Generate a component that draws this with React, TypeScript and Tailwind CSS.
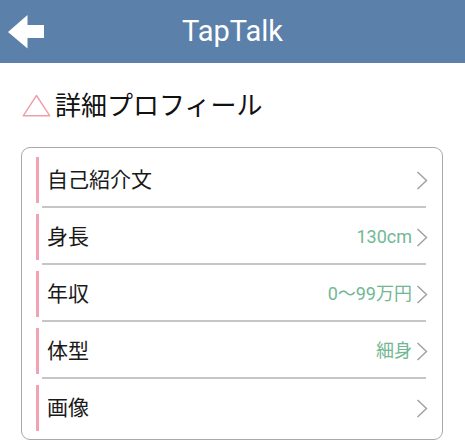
import React from "react";

interface ProfileRow {
    label: string;
    value?: string;
}

const rows: ProfileRow[] = [
    { label: "自己紹介文" },
    { label: "身長", value: "130cm" },
    { label: "年収", value: "0〜99万円" },
    { label: "体型", value: "細身" },
    { label: "画像" },
];

function BackArrow() {
    return (
        <svg width="37" height="34" viewBox="0 0 37 34" className="block">
            <path d="M0 17 L19.5 0 L19.5 10 L36 10 L36 23 L19.5 23 L19.5 33.5 Z" fill="#ffffff" />
        </svg>
    );
}

function Chevron() {
    return (
        <svg width="12" height="19" viewBox="0 0 12 19" className="block shrink-0">
            <polyline points="1.5,1 10.5,9.5 1.5,18" fill="none" stroke="#a2a2a2" strokeWidth="1.5" />
        </svg>
    );
}

export default function App() {
    return (
        <div className="w-[465px] h-[446px] bg-white overflow-hidden font-['Roboto','Noto_Sans_CJK_JP',sans-serif]">
            <header className="h-[63px] bg-[#5b80a9] grid grid-cols-[1fr_auto_1fr] items-center">
                <div className="pl-[8px] pt-[1px]">
                    <BackArrow />
                </div>
                <h1 className="text-white text-[29px] leading-none pb-[1px]">TapTalk</h1>
                <div />
            </header>

            <div className="mt-[30px] ml-[22px] flex items-center h-[26px]">
                <svg width="29" height="23" viewBox="0 0 29 23" className="block shrink-0 mt-[-1px]">
                    <polygon points="14.5,1.5 27.8,21.8 1.2,21.8" fill="none" stroke="#ee9fae" strokeWidth="1.4" strokeLinejoin="round" />
                </svg>
                <h2 className="ml-[4px] text-[26px] leading-none text-[#111111]">詳細プロフィール</h2>
            </div>

            <div className="mt-[28px] ml-[21px] w-[422px] h-[293px] border border-[#a9a9a9] rounded-[9px] pt-[3px]">
                {rows.map((row, i) => (
                    <div key={row.label}>
                        <div className="h-[55px] flex items-center pt-[3px] pr-[14px]">
                            <div className="ml-[14px] w-[3px] h-[46px] bg-[#f2a3b3]" />
                            <span className="ml-[8px] flex-1 text-[21px] leading-none text-[#1a1a1a]">{row.label}</span>
                            {row.value && (
                                <span className="mr-[4px] text-[18px] leading-none text-[#72b794]">{row.value}</span>
                            )}
                            <Chevron />
                        </div>
                        {i < rows.length - 1 && <div className="ml-[20px] mr-[16px] h-[2px] bg-[#c6c6c6]" />}
                    </div>
                ))}
            </div>
        </div>
    );
}
